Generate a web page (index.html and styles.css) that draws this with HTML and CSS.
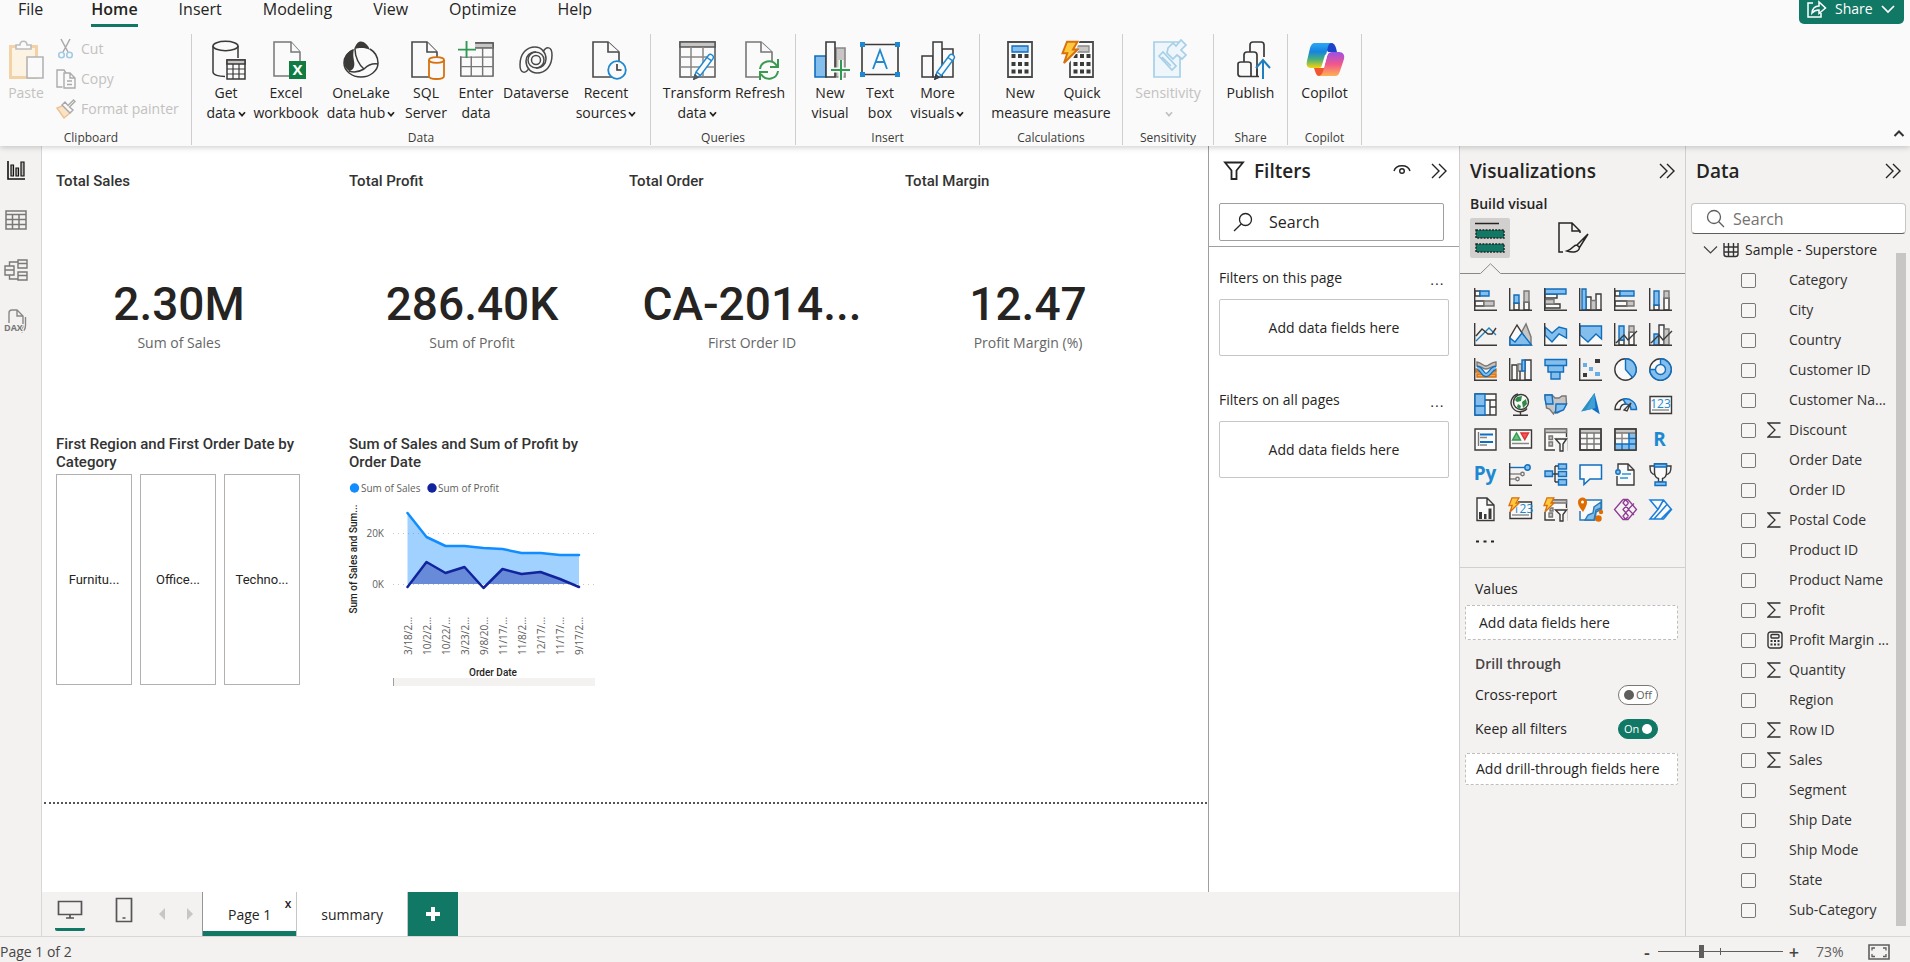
FILE: index.html
```html
<!DOCTYPE html>
<html lang="en">
<head>
<meta charset="utf-8">
<title>Sample - Superstore report</title>
<link rel="stylesheet" href="styles.css">
</head>
<body>
<svg width="0" height="0" class="defs" aria-hidden="true">
  <defs>
    <symbol id="chev" viewBox="0 0 8 8"><path d="M1 2.2 4 5.6 7 2.2" fill="none" stroke="currentColor" stroke-width="1.7"/></symbol>
    <symbol id="collapse" viewBox="0 0 16 16"><path d="M1 1l7 7-7 7M8 1l7 7-7 7" fill="none" stroke="currentColor" stroke-width="1.4"/></symbol>
    <symbol id="sigma" viewBox="0 0 14 16"><path d="M13.500 1H1l7 7-7 7h12.500" fill="none" stroke="currentColor" stroke-width="1.3"/></symbol>
    <symbol id="pencil" viewBox="0 0 22 27"><path d="M1 26 3 19 15.500 2.200q1.500-1.600 3.600-.2t.9 3.700L7.500 22.500zM3 19l4.500 3.500M14 4.500l4.600 3.400" fill="#fafafa" stroke="#1e88d0" stroke-width="1.500"/><path d="M1 26l1-4 3 2.300z" fill="#1e88d0"/></symbol>
    <symbol id="bolt" viewBox="0 0 12 16"><path d="M4 .8h7L8 6h3L2 15l2.200-6.500H1z" fill="#ffc83d" stroke="#d8700d" stroke-width="1.300"/></symbol>
  </defs>
</svg>

<header class="ribbon">
  <div class="tabs-row">
    <nav class="menu">
      <a href="#" class="menu-file">File</a><a href="#" class="active">Home</a><a href="#">Insert</a><a href="#">Modeling</a><a href="#">View</a><a href="#">Optimize</a><a href="#">Help</a>
    </nav>
    <button class="share"><svg width="20" height="17" viewBox="0 0 20 17" fill="none" stroke="#fff" stroke-width="1.500"><path d="M6 2H1v14h13v-4M5 12c.5-5 3-7 7-7V1l6.500 6L12 12.500V9c-3 0-5 .7-7 3z"/></svg>Share<svg width="14" height="10" viewBox="0 0 14 10"><path d="M1 2l6 6 6-6" fill="none" stroke="#fff" stroke-width="1.700"/></svg></button>
  </div>
  <div class="groups">
    <section class="group clipboard">
      <div class="buttons">
        <button class="rb disabled paste"><svg width="36" height="40" viewBox="-1 0 36 40"><path d="M1.500 6.500h26v31h-26z" fill="#fdf3e3" stroke="#f3d3a5" stroke-width="3"/><path d="M7 9V5h4c0-5 7-5 7 0h4v4z" fill="#fafafa" stroke="#bdbdbd" stroke-width="1.600"/><path d="M18 17h16v21H18z" fill="#fafafa" stroke="#b4b4b4" stroke-width="1.600"/></svg><span>Paste</span></button>
        <div class="small-buttons">
          <button class="disabled"><svg width="20" height="20" viewBox="0 0 20 20" fill="none"><path d="M5 0l7 13M14 0L7 13" stroke="#a9a9a9" stroke-width="1.500"/><circle cx="5.500" cy="16" r="2.800" stroke="#a4cbe4" stroke-width="1.600"/><circle cx="13.500" cy="16" r="2.800" stroke="#a4cbe4" stroke-width="1.600"/></svg>Cut</button>
          <button class="disabled"><svg width="20" height="20" viewBox="0 0 20 20" fill="#fafafa" stroke="#ababab" stroke-width="1.400"><path d="M6.500 18H1V1h7l2 3"/><path d="M8 4h6l5 5v10H8zM14 4v5h5M11 12h5M11 15.500h5"/></svg>Copy</button>
          <button class="disabled"><svg width="20" height="20" viewBox="0 0 20 20" stroke-width="1.400"><path d="M1 9l7 10 6-5-6-8z" fill="#fbe3c8" stroke="#efc18f"/><path d="M6 6l8 8 3-3-3.500-3L19 2.500 17.500 1 12 6.500 9 3z" fill="#fafafa" stroke="#a9a9a9"/></svg>Format painter</button>
        </div>
      </div>
      <h2>Clipboard</h2>
    </section>
    <section class="group">
      <div class="buttons">
        <button class="rb w50"><svg width="36" height="40" viewBox="-1 0 36 40" fill="#fafafa" stroke="#3b3a39" stroke-width="1.500"><path d="M4 6v25c0 3 6 5 13 5V18h12V6" stroke="none"/><ellipse cx="16.500" cy="6" rx="12.500" ry="4.700"/><path d="M4 6v26c0 3 6 4.500 12 4.500M29 6v12" fill="none"/><path d="M18 20h18v19H18z"/><path d="M18 20h18v4H18z" fill="#c8c6c4"/><path d="M18 29h18M18 34h18M24 24v15M30 24v15" stroke-width="1.200"/></svg><span>Get<br>data<svg class="chev"><use href="#chev"/></svg></span></button>
        <button class="rb w70"><svg width="36" height="40" viewBox="-1 0 36 40" fill="#fafafa" stroke="#777" stroke-width="1.500"><path d="M5 2h17l9 10v24H5z"/><path d="M22 2v10h9"/><path d="M20 21h17v18H20z" fill="#107c41" stroke="none"/><text x="28.500" y="35" class="xl" text-anchor="middle">X</text></svg><span>Excel<br>workbook</span></button>
        <button class="rb w80"><svg width="36" height="40" viewBox="0 0 36 40"><path d="M10 10C5 12 1 17 1 23c0 8 8 14 17 14s17-6 17-14c0-6-3-11-8-14" fill="#fafafa" stroke="#3b3a39" stroke-width="1.500"/><path d="M11 9.500C13 4 15 1.500 18 1.500s7 3 9 8.500c-5-2.500-11-2.500-16-.5zM11 9C4 12 1 17 1 22c0 4 2 7 5 9 5-1 6-5 5-10s-1-8 0-12z" fill="#3b3a39"/><path d="M12 9c0 8 4 16 9 20M21 29c4-4 8-6 14-5M21 29c-5 3-10 4-15 2" fill="none" stroke="#3b3a39" stroke-width="1.500"/></svg><span>OneLake<br>data hub<svg class="chev"><use href="#chev"/></svg></span></button>
        <button class="rb w50"><svg width="36" height="40" viewBox="0 0 36 40" fill="#fafafa" stroke="#4a4a4a" stroke-width="1.600"><path d="M4 2h15l10 10v25H4z"/><path d="M19 2v10h10"/><path d="M21 20v16c0 4 15 4 15 0V20" stroke="#d8700d" stroke-width="1.800"/><ellipse cx="28.500" cy="20" rx="7.500" ry="2.800" stroke="#d8700d" stroke-width="1.800"/></svg><span>SQL<br>Server</span></button>
        <button class="rb w50"><svg width="36" height="40" viewBox="0 0 38 40" fill="#fafafa" stroke="#555" stroke-width="1.500"><path d="M3 2h34v35H3z"/><path d="M15 2h22v5H15z" fill="#c8c6c4"/><path d="M3 17h34M3 27h34M14 10v27M26 7v30M15 7h22" stroke="#777"/><path d="M0 0h18v16H0z" stroke="none"/><path d="M9 0v18M0 9h19" stroke="#2f9b52" stroke-width="2"/></svg><span>Enter<br>data</span></button>
        <button class="rb w70"><svg width="36" height="40" viewBox="0 0 36 40" fill="none" stroke="#4a4a4a" stroke-width="1.500"><path d="M11 28C8 34 2 34 2 25 2 13 9 7 17 7c7 0 11 6 11 12 0 5-4 9-9 9-6 0-9-4-9-8 0-5 4-8 8-8"/><path d="M25 12c3-6 9-6 9 3 0 12-7 18-15 18-7 0-11-6-11-12 0-5 4-9 9-9 6 0 9 4 9 8 0 5-4 8-8 8"/><circle cx="18" cy="20" r="4.500"/></svg><span>Dataverse</span></button>
        <button class="rb w70"><svg width="36" height="40" viewBox="-1 0 36 40" fill="#fafafa" stroke="#4a4a4a" stroke-width="1.600"><path d="M4 2h15l11 10v25H4z"/><path d="M19 2v10h11"/><circle cx="28" cy="30" r="8.800" stroke="#1e88d0" stroke-width="1.800"/><path d="M28 24v6h4.500" stroke="#3b3a39"/></svg><span>Recent<br>sources<svg class="chev"><use href="#chev"/></svg></span></button>
      </div>
      <h2>Data</h2>
    </section>
    <section class="group">
      <div class="buttons">
        <button class="rb w74"><svg width="38" height="40" viewBox="-1 0 38 40" fill="#fafafa" stroke="#555" stroke-width="1.500"><path d="M1 2h35v35H1z"/><path d="M1 2h35v5H1z" fill="#c8c6c4"/><path d="M1 17h35M1 27h35M12 7v30M24 7v30" stroke="#8a8886"/><use href="#pencil" x="12" y="13" width="26" height="27"/></svg><span>Transform<br>data<svg class="chev"><use href="#chev"/></svg></span></button>
        <button class="rb w52"><svg width="36" height="40" viewBox="0 0 36 40" fill="#fafafa" stroke="#777" stroke-width="1.600"><path d="M4 2h15l11 10v25H4z"/><path d="M19 2v10h11"/><path d="M17 21h18v18H17z" stroke="none"/><path d="M18 29c1-8 12-11 17-3M36 19v8h-8M36 31c-1 8-12 11-17 3M18 40v-8h8" fill="none" stroke="#3a9a50" stroke-width="2"/></svg><span>Refresh</span></button>
      </div>
      <h2>Queries</h2>
    </section>
    <section class="group">
      <div class="buttons">
        <button class="rb w50"><svg width="36" height="40" viewBox="-2 0 36 40" stroke-width="1.600"><path d="M1 16h11v21H1z" fill="#83beec" stroke="#106ebe"/><path d="M22 8h9v29h-9z" fill="#c8c6c4" stroke="#8a8886"/><path d="M12 2h9v35h-9z" fill="#fafafa" stroke="#3b3a39"/><path d="M27 20v20M17 30h20" stroke="#fafafa" stroke-width="5"/><path d="M27 20v20M17 30h19" stroke="#2f9b52" stroke-width="2"/></svg><span>New<br>visual</span></button>
        <button class="rb w50"><svg width="40" height="40" viewBox="0 0 40 40" fill="#1e88d0"><path d="M2 4.500h36v30H2z" fill="#fafafa" stroke="#3b3a39" stroke-width="1.600"/><path d="M0 2h5v5H0zM35 2h5v5h-5zM0 32h5v5H0zM35 32h5v5h-5z"/><path d="M13 29 20 10l7 19M15.500 22h9" fill="none" stroke="#1e88d0" stroke-width="1.800"/></svg><span>Text<br>box</span></button>
        <button class="rb w65"><svg width="38" height="40" viewBox="-1 0 38 40" fill="#fafafa" stroke="#3b3a39" stroke-width="1.500"><path d="M2 16h11v21H2zM22 9h11v28H22z"/><path d="M13 2h9v35h-9z"/><use href="#pencil" x="12" y="13" width="26" height="27"/></svg><span>More<br>visuals<svg class="chev"><use href="#chev"/></svg></span></button>
      </div>
      <h2>Insert</h2>
    </section>
    <section class="group">
      <div class="buttons">
        <button class="rb w62"><svg width="26" height="40" viewBox="0 0 26 40"><path d="M1 2h24v35H1z" fill="#fafafa" stroke="#4a4a4a" stroke-width="1.800"/><path d="M5 6h16v6H5z" fill="#83beec" stroke="#106ebe" stroke-width="1.300"/><path d="M4.500 16h17M4.500 24h17M4.500 31.500h17" stroke="#3b3a39" stroke-width="4" stroke-dasharray="4 2.500"/></svg><span>New<br>measure</span></button>
        <button class="rb w62"><svg width="36" height="40" viewBox="3 0 36 40"><path d="M9 2h23v35H9z" fill="#fafafa" stroke="#4a4a4a" stroke-width="1.800"/><path d="M13 6h15v6H13z" fill="#c8c6c4" stroke="#8a8886" stroke-width="1.300"/><path d="M12.500 24h17M12.500 31.500h17M12.500 16h17" stroke="#3b3a39" stroke-width="4" stroke-dasharray="4 2.500"/><path d="M5 0h14l-4 10h3L8 23H0z" fill="#fafafa"/><use href="#bolt" x="0" y="0" width="18" height="25"/></svg><span>Quick<br>measure</span></button>
      </div>
      <h2>Calculations</h2>
    </section>
    <section class="group">
      <div class="buttons">
        <button class="rb w72 disabled"><svg width="36" height="40" viewBox="-1 0 36 40" fill="#eef6fb" stroke="#a6cfe8" stroke-width="1.700"><path d="M3 2h26v35H3z"/><path d="M8 16l4-4 13 14-4 4zM11 17l9 9M17 8l5-5 3 3 5-6 5 5-5 5 5 5-4 4-5-4-4 4-6-6z"/></svg><span>Sensitivity<br><svg class="chev"><use href="#chev"/></svg></span></button>
      </div>
      <h2>Sensitivity</h2>
    </section>
    <section class="group">
      <div class="buttons">
        <button class="rb w55"><svg width="36" height="40" viewBox="-2 0 36 40" fill="#fafafa" stroke="#3b3a39" stroke-width="1.700"><path d="M15 12V5q0-3 3-3h8q3 0 3 3v12M9 22v-7q0-3 3-3h7q3 0 3 3v21"/><path d="M3 24q0-2 3-2h7q3 0 3 2v12M3 24v10q0 2.500 3 2.500h18M22 29v7" fill="none"/><path d="M28 39V20M21 28l7-8 7 8" fill="none" stroke="#1e7fc0" stroke-width="2"/></svg><span>Publish</span></button>
      </div>
      <h2>Share</h2>
    </section>
    <section class="group">
      <div class="buttons">
        <button class="rb w55"><svg width="40" height="40" viewBox="0 0 40 40"><defs><linearGradient id="c1" x1="0" y1="0" x2="0" y2="1"><stop offset="0" stop-color="#2aa8f2"/><stop offset=".35" stop-color="#1683e0"/><stop offset=".65" stop-color="#48b07a"/><stop offset="1" stop-color="#f8d30c"/></linearGradient><linearGradient id="c2" x1="0" y1="0" x2="0" y2="1"><stop offset="0" stop-color="#9a50ea"/><stop offset=".5" stop-color="#f0568c"/><stop offset="1" stop-color="#ffb152"/></linearGradient></defs><path d="M18 3h8c3 0 4 2 5 5l1 4h-9z" fill="#1b44c8"/><path d="M22 36h-8c-2 0-3-2-4-5l-1-3h11z" fill="#f0562f"/><path d="M10 3h16c-3 1-3 4-4 8l-3 12c-1 4-3 5-6 5H6c-4 0-5-3-4-7L5 8c1-3 2-5 5-5z" fill="url(#c1)"/><path d="M30 36H14c3-1 4-4 5-8l3-12c1-3 3-4 5-4h7c4 0 6 3 5 7l-4 12c-1 3-2 5-5 5z" fill="url(#c2)"/><path d="M20 15l3-2-4 14-3 1z" fill="#fff"/></svg><span>Copilot</span></button>
      </div>
      <h2>Copilot</h2>
    </section>
    <button class="ribbon-collapse" aria-label="Collapse ribbon"><svg width="12" height="9" viewBox="0 0 12 9"><path d="M1.500 7 6 2.500 10.500 7" fill="none" stroke="#333" stroke-width="2"/></svg></button>
  </div>
</header>

<main class="workspace">
  <nav class="rail">
    <button aria-label="Report view"><svg width="24" height="24" viewBox="0 0 24 24" fill="none" stroke="#111" stroke-width="1.600"><path d="M4 3v18h17"/><path d="M7 7h2.500v11H7zM12 10h2.500v8H12zM17 4h3v14h-3z" fill="#b9b7b5" stroke-width="1.200"/></svg></button>
    <button aria-label="Table view"><svg width="24" height="24" viewBox="0 0 24 24" fill="none" stroke="#7a7876" stroke-width="1.500"><path d="M2 3h20v18H2zM2 6.500h20M2 11.500h20M2 16.500h20M8.500 6.500V21M15 6.500V21"/></svg></button>
    <button aria-label="Model view"><svg width="24" height="24" viewBox="0 0 24 24" fill="none" stroke="#7a7876" stroke-width="1.400"><path d="M1 8h9v9H1zM1 12h9M14 2h9v8h-9zM14 5.500h9M14 14h9v8h-9zM14 17.500h9M5.500 8V4H14M5.500 17v4H14"/></svg></button>
    <button aria-label="DAX query view"><svg width="24" height="26" viewBox="0 0 24 26" fill="none" stroke="#8a8886" stroke-width="1.400"><path d="M5 15V5q0-3 3-3h5l6 6v9q0 4-3 5M13 2v6h6M21.500 9v8q0 6-4 7"/><text x="0" y="23" class="dax">DAX</text></svg></button>
  </nav>

  <div class="center">
    <div class="center-top">
      <section class="canvas">
        <div class="report">
          <article class="card"><h3>Total Sales</h3><p class="value">2.30M</p><p class="caption">Sum of Sales</p></article>
          <article class="card"><h3>Total Profit</h3><p class="value">286.40K</p><p class="caption">Sum of Profit</p></article>
          <article class="card"><h3>Total Order</h3><p class="value">CA-2014...</p><p class="caption">First Order ID</p></article>
          <article class="card"><h3>Total Margin</h3><p class="value">12.47</p><p class="caption">Profit Margin (%)</p></article>
          <article class="visual"><h3>First Region and First Order Date by Category</h3>
            <div class="tiles"><button>Furnitu...</button><button>Office...</button><button>Techno...</button></div>
          </article>
          <article class="visual"><h3>Sum of Sales and Sum of Profit by Order Date</h3>
            <svg class="chart" width="246" height="210" viewBox="-1 0 246 210">
              <circle cx="4.500" cy="12" r="4.700" fill="#118dff"/><text x="11" y="16">Sum of Sales</text>
              <circle cx="82" cy="12" r="4.700" fill="#12239e"/><text x="88" y="16">Sum of Profit</text>
              <path d="M43 57.500h202M43 108.500h202" stroke="#c8c6c4" stroke-dasharray="1 4"/>
              <text x="34" y="61" text-anchor="end">20K</text><text x="34" y="112" text-anchor="end">0K</text>
              <path d="M57.500 37 76.500 61 95.500 70 114.500 70 133.500 72 152.500 73 171.500 77 190.500 77 210 79 229 79V108H57.500z" fill="#118dff" fill-opacity=".4"/>
              <path d="M59.500 108 76.500 86 95.500 97 114.500 91 130 108 137 108 152.500 93 171.500 98 190.500 96 210 103 222 108z" fill="#12239e" fill-opacity=".4"/>
              <path d="M57.500 37 76.500 61 95.500 70 114.500 70 133.500 72 152.500 73 171.500 77 190.500 77 210 79 229 79" fill="none" stroke="#118dff" stroke-width="2.500" stroke-linecap="round" stroke-linejoin="round"/>
              <path d="M57.500 111 76.500 86 95.500 97 114.500 91 133.500 112 152.500 93 171.500 98 190.500 96 210 103 229 111" fill="none" stroke="#12239e" stroke-width="2.500" stroke-linecap="round" stroke-linejoin="round"/>
              <text class="axis" transform="translate(7 83) rotate(-90)" text-anchor="middle">Sum of Sales and Sum...</text>
              <g class="ticks">
                <text transform="translate(62 179) rotate(-90)">3/18/2...</text>
                <text transform="translate(81 179) rotate(-90)">10/2/2...</text>
                <text transform="translate(100 179) rotate(-90)">10/22/...</text>
                <text transform="translate(119 179) rotate(-90)">3/23/2...</text>
                <text transform="translate(138 179) rotate(-90)">9/8/20...</text>
                <text transform="translate(157 179) rotate(-90)">11/17/...</text>
                <text transform="translate(176 179) rotate(-90)">11/8/2...</text>
                <text transform="translate(195 179) rotate(-90)">12/17/...</text>
                <text transform="translate(214 179) rotate(-90)">11/17/...</text>
                <text transform="translate(233 179) rotate(-90)">9/17/2...</text>
              </g>
              <text class="axis" x="143" y="200" text-anchor="middle">Order Date</text>
              <path d="M43 202h202v8H43z" fill="#f3f2f1"/><path d="M43.500 202v8" stroke="#a19f9d"/>
            </svg>
          </article>
        </div>
        <div class="page-edge"></div>
      </section>

      <aside class="filters">
        <header class="pane-head">
          <svg width="22" height="20" viewBox="0 0 22 20"><path d="M2 1.500h18l-6.500 8V18h-5V9.500z" fill="none" stroke="#252423" stroke-width="1.800"/></svg>
          <h2>Filters</h2>
          <button class="eye" aria-label="Show filters"><svg width="18" height="14" viewBox="0 0 18 14" fill="none" stroke="#252423" stroke-width="1.400"><path d="M1 7c2-7 14-7 16 0"/><circle cx="9" cy="7" r="2.300"/></svg></button>
          <button aria-label="Collapse filters"><svg width="16" height="16"><use href="#collapse"/></svg></button>
        </header>
        <div class="filter-search"><svg width="20" height="20" viewBox="0 0 20 20" fill="none" stroke="#252423" stroke-width="1.300"><circle cx="12.500" cy="7.500" r="6"/><path d="M8.200 12 1 19"/></svg><input type="text" placeholder="Search" aria-label="Search filters"></div>
        <section class="filter-block"><div class="filter-title"><h3>Filters on this page</h3><button>...</button></div><div class="dropzone">Add data fields here</div></section>
        <section class="filter-block"><div class="filter-title"><h3>Filters on all pages</h3><button>...</button></div><div class="dropzone">Add data fields here</div></section>
      </aside>
    </div>

    <footer class="page-tabs">
      <button class="device on" aria-label="Desktop layout"><svg width="26" height="20" viewBox="0 0 26 20" fill="none" stroke="#555" stroke-width="1.700"><path d="M1.500 1.500h23v13h-23zM13 14.500V18M9 18h8"/></svg></button>
      <button class="device" aria-label="Mobile layout"><svg width="18" height="26" viewBox="0 0 18 26" fill="none" stroke="#555" stroke-width="1.700"><path d="M1.500 1.500h15v23h-15zM7.500 21h3"/></svg></button>
      <div class="steps">
        <button aria-label="Previous page"><svg width="6" height="12" viewBox="0 0 6 12"><path d="M6 0v12L0 6z" fill="#c8c6c4"/></svg></button>
        <button aria-label="Next page"><svg width="6" height="12" viewBox="0 0 6 12"><path d="M0 0v12l6-6z" fill="#c8c6c4"/></svg></button>
      </div>
      <div class="page-tab current"><a href="#">Page 1</a><button class="close" aria-label="Delete page">x</button></div>
      <div class="page-tab"><a href="#">summary</a></div>
      <button class="add" aria-label="New page"><svg width="14" height="14" viewBox="0 0 14 14"><path d="M7 0v14M0 7h14" stroke="#fff" stroke-width="4"/></svg></button>
    </footer>
  </div>

  <aside class="viz">
    <header class="pane-head"><h2>Visualizations</h2><button aria-label="Collapse visualizations"><svg width="16" height="16"><use href="#collapse"/></svg></button></header>
    <h3 class="build">Build visual</h3>
    <div class="mode">
      <button class="sel" aria-label="Build visual"><svg width="32" height="32" viewBox="0 0 32 32"><path d="M1 1.500h24" stroke="#252423" stroke-width="1.500"/><path d="M2 8h28v8H2zM2 22h28v8H2z" fill="#117865" stroke="#252423" stroke-width="1.500" stroke-dasharray="2 1.200"/></svg></button>
      <button aria-label="Format visual"><svg width="32" height="32" viewBox="0 0 32 32" fill="none" stroke="#252423" stroke-width="1.500"><path d="M5 30H1V1h13l8 8v2M14 1v8h8M30 12 19 23l2.500 2.500L30 12zM19 23c-4 0-4 4-10 6 6 2 12 1 12.500-3.500"/></svg></button>
    </div>
    <svg class="callout" width="225" height="12" viewBox="0 0 225 12"><path d="M0 10.500h20.500L30.500 .8l10 9.700H225" fill="none" stroke="#8a8886"/></svg>
    <div class="gallery">
      <button aria-label="Stacked bar chart"><svg viewBox="0 0 23 23"><path class="w" d="M1 3h5v5H1zM1 13h9v5H1z"/><path class="b" d="M6 3h9v5H6z"/><path class="g" d="M10 13h10v5H10z"/><path class="k" d="M.7 0v22.300H23"/></svg></button>
      <button aria-label="Stacked column chart"><svg viewBox="0 0 23 23"><path class="w" d="M5 15h5v7H5zM15 14h5v8h-5z"/><path class="b" d="M5 7h5v8H5z"/><path class="g" d="M15 3h5v11h-5z"/><path class="k" d="M.7 0v22.300H23"/></svg></button>
      <button aria-label="Clustered bar chart"><svg viewBox="0 0 23 23"><path class="w" d="M1 6h12v4H1zM1 16h15v4H1z"/><path class="g" d="M1 11.500h9v4.500H1z"/><path class="b" d="M1 1h21v5H1z"/><path class="k" d="M.7 0v22.300H23"/></svg></button>
      <button aria-label="Clustered column chart"><svg viewBox="0 0 23 23"><path class="w" d="M7 9h5v13H7zM17 6h5v16h-5z"/><path class="g" d="M12 12.500h5V22h-5z"/><path class="b" d="M3 1h4v21H3z"/><path class="k" d="M.7 0v22.300H23"/></svg></button>
      <button aria-label="100% stacked bar chart"><svg viewBox="0 0 23 23"><path class="w" d="M1 3h5v5H1zM1 13h12v5H1z"/><path class="b" d="M6 3h14v5H6z"/><path class="g" d="M13 13h7v5h-7z"/><path class="k" d="M.7 0v22.300H23"/></svg></button>
      <button aria-label="100% stacked column chart"><svg viewBox="0 0 23 23"><path class="w" d="M5 17h5v5H5zM15 10h5v12h-5z"/><path class="b" d="M5 3h5v14H5z"/><path class="g" d="M15 3h5v7h-5z"/><path class="k" d="M.7 0v22.300H23"/></svg></button>

      <button aria-label="Line chart"><svg viewBox="0 0 23 23"><path class="n" d="M2 18 15 5l7 7"/><path class="k" d="M2 13l6-7 6 5 4 0 4-6M.7 0v22.300H23"/></svg></button>
      <button aria-label="Area chart"><svg viewBox="0 0 23 23"><path class="g" d="M11 12l6-11 5 13v8H12z"/><path class="w" d="M1 22v-8L8 2l7 11-3 9z"/><path class="b" d="M1 22v-7l5 4 7-9 9.500 12z"/></svg></button>
      <button aria-label="Stacked area chart"><svg viewBox="0 0 23 23"><path d="M1 11l7 8 7-7 8 3v7H1z" fill="#fafafa"/><path class="b" d="M1 4l7 6 7-6 7.500 2v9L15 11l-7 8-7-7z"/><path class="k" d="M.7 0v22.300H23"/></svg></button>
      <button aria-label="100% stacked area chart"><svg viewBox="0 0 23 23"><path d="M1 10h22v12H1z" fill="#fafafa"/><path class="b" d="M1 3h21.500v13L17 11l-8 8-8-7z"/><path class="k" d="M.7 0v22.300H23"/></svg></button>
      <button aria-label="Line and stacked column chart"><svg viewBox="0 0 23 23"><path class="w" d="M5 17h5v5H5zM15 9h5v13h-5z"/><path class="b" d="M5 3h5v14H5z"/><path class="g" d="M15 3h5v6h-5z"/><path class="k" d="M2 20l8-8 4 5 9-9M.7 0v22.300H23"/></svg></button>
      <button aria-label="Line and clustered column chart"><svg viewBox="0 0 23 23"><path class="b" d="M5 11h5v11H5z"/><path class="w" d="M10 2h5v20h-5z"/><path class="g" d="M15 6h5v16h-5z"/><path class="k" d="M2 20l8-8 4 5 9-9M.7 0v22.300H23"/></svg></button>

      <button aria-label="Ribbon chart"><svg viewBox="0 0 23 23"><path d="M2 11h5v3H2zM17 11h5v3h-5zM3 16h19v3H3z" fill="#f7a84a" stroke="#d8700d"/><path class="g" d="M3 4c5 1 6 4 9 4s5-4 10-4v4c-5 0-6 3-10 3S8 8 3 8z"/><path d="M3 10c5 0 5 7 9 7s5-7 10-7" fill="none" stroke="#106ebe" stroke-width="4.500"/><path d="M3 10c5 0 5 7 9 7s5-7 10-7" fill="none" stroke="#83beec" stroke-width="2"/><path class="k" d="M.7 0v22.300H23"/></svg></button>
      <button aria-label="Waterfall chart"><svg viewBox="0 0 23 23"><path class="w" d="M3 7h5v15H3zM16 2h6v20h-6z"/><path class="g" d="M9 6h4v7H9z"/><path class="b" d="M13 2h3v11h-3z"/><path class="k" d="M.7 0v22.300H23M11 13v9"/></svg></button>
      <button aria-label="Funnel"><svg viewBox="0 0 23 23"><path class="b" d="M1 1.500h21.500v6H1zM4 7.500h15.500v6.500H4zM7 14h9v7H7z"/></svg></button>
      <button aria-label="Scatter chart"><svg viewBox="0 0 23 23"><path d="M4 5h4v4H4zM10 9h4v4h-4zM16 14h5v4h-5z" fill="#68aee6"/><path d="M16 1h5v4h-5zM4 15h4v4H4z" fill="#3b3a39"/><path class="k" d="M.7 0v22.300H23"/></svg></button>
      <button aria-label="Pie chart"><svg viewBox="0 0 23 23"><circle class="w" cx="11.500" cy="11.500" r="10.700"/><path class="b" d="M11.500 .8a10.700 10.700 0 0 1 7 18.700l-7-8z"/></svg></button>
      <button aria-label="Donut chart"><svg viewBox="0 0 23 23"><circle class="w" cx="11.500" cy="11.500" r="10.700"/><path class="b" d="M11.500 .8a10.700 10.700 0 1 1-10.700 10.700h5.700l5-5z"/><circle cx="11.500" cy="11.500" r="5" fill="#f3f2f1" stroke="#106ebe" stroke-width="1.400"/></svg></button>

      <button aria-label="Treemap"><svg viewBox="0 0 23 23"><path class="w" d="M1 1h21v21H1zM11 7h11M16 7v15M16 14h6"/><path class="b" d="M1 1h10v12H1zM1 13h10v9H1z"/></svg></button>
      <button aria-label="Map"><svg viewBox="0 0 23 23"><path class="k" d="M9 1a9 9 0 1 0 9 14.500M11.500 19v3M4 22.300h15"/><circle class="w" cx="12" cy="9" r="7.500"/><path d="M8 4l5-1-1 5-4 1-2-2zM13 9l4-3 1 5-4 4zM9 11l3 2-1 3-3-2z" fill="#2d8a45"/></svg></button>
      <button aria-label="Filled map"><svg viewBox="0 0 23 23"><path class="g" d="M1 2h7l3 3h4l3-2h4l.5 8-3 5-6 4-3-1-1 2-4-5-3-1z"/><path class="b" d="M1 2h7l1 9H2L1 6zM12 11h10.500l-3 6-8 3z"/></svg></button>
      <button aria-label="Azure map"><svg viewBox="0 0 23 26"><path d="M16 0 1 21l12-3z" fill="#50b0e0"/><path d="M16 0v13l-3 5-12 3z" fill="#2c8fc4"/><path d="M16 0l6 24-9-6z" fill="#0f6fc6"/><path d="M16 0l1 17-4 1-6 1z" fill="#3f9fd4"/></svg></button>
      <button aria-label="Gauge"><svg viewBox="0 0 23 23"><path class="w" d="M1 16.500A10.500 10.500 0 0 1 11.500 6v5c-3 0-5 2-5.500 5.500z"/><path class="b" d="M9 6.300a10.500 10.500 0 0 1 13.500 10.200H17c0-3-2-5-5-5.500z"/><path d="M10 17l7-7-4 8z" class="k"/></svg></button>
      <button aria-label="Card"><svg viewBox="0 0 23 23"><path class="w" d="M1 3.500h21.500v17H1z"/><path d="M3 17h17" stroke="#8a8886"/><text x="11.500" y="14.500" text-anchor="middle" class="num">123</text></svg></button>

      <button aria-label="Multi-row card"><svg viewBox="0 0 23 23"><path class="w" d="M1 1h21v21H1z"/><path d="M4.500 4v14" stroke="#777"/><path d="M6 6.500h13M6 14h13" stroke="#106ebe" stroke-width="2"/><path d="M6 9.500h7M6 17h7" stroke="#8a8886"/></svg></button>
      <button aria-label="KPI"><svg viewBox="0 0 23 23"><path class="w" d="M1 2h21.500v18H1z"/><path d="M3.500 12 7.500 5l4 7z" fill="#6fbf82" stroke="#2f9b52"/><path d="M12 5h7.500l-3.700 6.500z" fill="#ee5a5a" stroke="#e03030"/><path d="M3 15.500h17" stroke="#8a8886" stroke-width="1.500"/></svg></button>
      <button aria-label="Slicer"><svg viewBox="0 0 23 23"><path class="w" d="M1 1h21.500v21H1z"/><path class="g" d="M1 1h21.500v3.500H1z"/><path class="g" d="M5 8h3.500v3.500H5zM5 14h3.500v4H5z"/><path d="M11 9h12v14H11z" fill="#f3f2f1"/><path class="w" d="M11.500 11h11l-3.500 5v7h-3v-7z"/></svg></button>
      <button aria-label="Table"><svg viewBox="0 0 23 23"><path class="w" d="M1 1h21v21H1z"/><path class="g" d="M1 1h21v4H1zM1 10.500h21M1 16h21M8 5v17M15 5v17"/><path class="k" d="M1 1h21v21H1z"/></svg></button>
      <button aria-label="Matrix"><svg viewBox="0 0 23 23"><path class="w" d="M1 1h21v21H1z"/><path d="M15 5h7v17H1v-6h14z" fill="#83beec"/><path class="g" d="M1 1h21v4H1z"/><path d="M1 10.500h14M8 5v11M15 5v5" stroke="#8a8886"/><path d="M1 16h21M15 10.500h7M8 16v6M15 5v17" stroke="#106ebe"/><path class="k" d="M1 1h21v21H1z"/></svg></button>
      <button aria-label="R script visual"><svg viewBox="0 0 23 23"><text x="10.500" y="18" text-anchor="middle" class="rtext">R</text></svg></button>

      <button aria-label="Python visual"><svg viewBox="0 0 23 23"><text x="11" y="17" text-anchor="middle" class="rtext">Py</text></svg></button>
      <button aria-label="Key influencers"><svg viewBox="0 0 23 23"><path d="M1 4.500h15" stroke="#106ebe" stroke-width="1.400"/><circle class="b" cx="18.500" cy="4.500" r="2.700"/><path d="M1 11h11M1 16h6" stroke="#8a8886" stroke-width="1.400"/><circle class="gh" cx="13.500" cy="11" r="1.700"/><circle class="gh" cx="8.500" cy="16" r="1.700"/><path class="k" d="M.7 0v22.300H23"/></svg></button>
      <button aria-label="Decomposition tree"><svg viewBox="0 0 23 23"><path class="k" d="M8 11h6M11 3v16M11 3h3M11 19h3"/><path class="b" d="M1 8h7.500v5.500H1zM14.500 1h8v5h-8zM14.500 8.500h8v5h-8zM14.500 16.500h8v5.500h-8z"/></svg></button>
      <button aria-label="Q&amp;A"><svg viewBox="0 0 23 23"><path d="M1 2h21.500v14H11l-6 5.500V16H1z" fill="#fafafa" stroke="#106ebe" stroke-width="1.500"/></svg></button>
      <button aria-label="Narrative"><svg viewBox="0 0 23 23"><path class="w" d="M4 6V1h10l6 6v15H3v-9"/><path class="k" d="M14 1v6h6"/><path d="M8 11h9M6 15h8" stroke="#2f94dc" stroke-width="1.400"/><circle cx="4" cy="9" r="2.200" class="b"/></svg></button>
      <button aria-label="Metrics"><svg viewBox="0 0 23 23"><path class="w" d="M5.500 3H1c0 6 1 8 6 9M17.500 3H22c0 6-1 8-6 9"/><path class="w" d="M5.500 1h12v8c0 4-2 6-4 6.500V19h-4v-3.500c-2-.5-4-2.500-4-6.500z"/><path class="b" d="M5.500 1h12v3h-12zM6 19h11v3.500H6z"/></svg></button>

      <button aria-label="Paginated report"><svg viewBox="0 0 23 23"><path class="w" d="M3 0h10l7 7v15.500H3zM13 0v7h7"/><path d="M5 14h3v7H5zM10 16h2.500v5H10zM14.500 10.500h3V21h-3z" fill="#3b3a39"/></svg></button>
      <button aria-label="Card (new)"><svg viewBox="0 0 23 23"><path class="w" d="M1 4h21.500v16.500H1z"/><path d="M3 17h17" stroke="#8a8886"/><text x="14" y="14.500" text-anchor="middle" class="num">123</text><path d="M0 0h9v8l-7 6H0z" fill="#f3f2f1"/><use href="#bolt" x="-1" y="-1" width="12" height="16"/></svg></button>
      <button aria-label="Slicer (new)"><svg viewBox="0 0 23 23"><path class="w" d="M1 2h21.500v20H1z"/><path class="g" d="M8 2h14.500v3H8zM5 15h3.500v4H5zM6 10h3v3H6z"/><path d="M11 10h12v13H11zM0 0h8v8l-6 6H0z" fill="#f3f2f1"/><path class="w" d="M11.500 12h11L19 16.500V23h-3v-6.500z"/><use href="#bolt" x="-1" y="-1" width="12" height="16"/></svg></button>
      <button aria-label="ArcGIS Maps"><svg viewBox="0 0 23 23"><path d="M6 2h16.500v9L17 14l-1 8H1v-9" fill="#fafafa" stroke="#2a7ab8" stroke-width="1.500"/><path d="M22 4v6l-5 2-2 10H6l3-5 5-2 1-6z" fill="#83beec" stroke="#2a7ab8"/><path d="M4 14C0 9-1 7-1 4c0-6 9-6 9 0 0 3-1 5-4 10z" fill="#e06c00"/><circle cx="3.500" cy="4" r="1.500" fill="#fff"/><circle cx="22" cy="14" r="2.200" fill="#e06c00"/><circle cx="19.500" cy="20.500" r="3.200" fill="#e06c00"/></svg></button>
      <button aria-label="Power Apps"><svg viewBox="0 0 23 23"><path d="M9 1.500h2.500L9 5l5.500 6L20 5.500M14 1.500h-2.500M14 1.500l8.500 10L14 21.500h-2.500L9 18l5.500-6.500L20 17M9 1.500l-8.500 10L9 21.500h2.500M14.500 5 9 11.500l5.500 6.500M11.500 1.500l3 3.500M14.500 18l-3 3.500" fill="none" stroke="#8f3a94" stroke-width="1.300"/></svg></button>
      <button aria-label="Power Automate"><svg viewBox="0 0 23 23"><path d="M1 2h13.500l8 9.500-8 9.500H1l8-9.500zM18 6.500 5 21M9 11.500 14.500 2M12 21l10-10" fill="#fafafa" stroke="#1a7fdc" stroke-width="1.500"/></svg></button>
      <button aria-label="Get more visuals"><svg viewBox="0 0 23 23"><path d="M2 7.500h3v2H2zM9.500 7.500h3v2h-3zM17 7.500h3v2h-3z" fill="#252423"/></svg></button>
    </div>
    <div class="wells">
      <h4>Values</h4>
      <div class="well">Add data fields here</div>
      <h4 class="strong">Drill through</h4>
      <label class="toggle-row"><span>Cross-report</span><input type="checkbox" role="switch"><span class="switch"></span></label>
      <label class="toggle-row"><span>Keep all filters</span><input type="checkbox" role="switch" checked><span class="switch"></span></label>
      <div class="well drill">Add drill-through fields here</div>
    </div>
  </aside>

  <aside class="data">
    <header class="pane-head"><h2>Data</h2><button aria-label="Collapse data"><svg width="16" height="16"><use href="#collapse"/></svg></button></header>
    <div class="data-search"><svg width="20" height="20" viewBox="0 0 20 20" fill="none" stroke="#605e5c" stroke-width="1.300"><circle cx="8" cy="8" r="6.500"/><path d="M12.800 12.800 18 18"/></svg><input type="text" placeholder="Search" aria-label="Search data"></div>
    <div class="tree">
      <div class="tree-list">
        <button class="table-row"><svg width="15" height="10" viewBox="0 0 15 10"><path d="M1 1.500l6.500 6.500L14 1.500" fill="none" stroke="#444" stroke-width="1.200"/></svg><svg width="16" height="16" viewBox="0 0 16 16" fill="none" stroke="#333" stroke-width="1.400"><path d="M1 1v11q0 2.500 2.500 2.500h9Q15 14.500 15 12V1M1 5h14M1 10h14M5.500 1v13.500M10.500 1v13.500"/></svg>Sample - Superstore</button>
        <label><input type="checkbox"><i></i>Category</label>
        <label><input type="checkbox"><i></i>City</label>
        <label><input type="checkbox"><i></i>Country</label>
        <label><input type="checkbox"><i></i>Customer ID</label>
        <label><input type="checkbox"><i></i>Customer Na...</label>
        <label><input type="checkbox"><i><svg><use href="#sigma"/></svg></i>Discount</label>
        <label><input type="checkbox"><i></i>Order Date</label>
        <label><input type="checkbox"><i></i>Order ID</label>
        <label><input type="checkbox"><i><svg><use href="#sigma"/></svg></i>Postal Code</label>
        <label><input type="checkbox"><i></i>Product ID</label>
        <label><input type="checkbox"><i></i>Product Name</label>
        <label><input type="checkbox"><i><svg><use href="#sigma"/></svg></i>Profit</label>
        <label><input type="checkbox"><i><svg class="calc" viewBox="0 0 16 18" fill="none" stroke="#333" stroke-width="1.400"><rect x="1" y="1" width="14" height="16" rx="2.500"/><rect x="4" y="3.500" width="8" height="3.500" rx="1"/><path d="M3.500 10h9M3.500 13.500h9" stroke-width="2" stroke-dasharray="2 1.500"/></svg></i>Profit Margin ...</label>
        <label><input type="checkbox"><i><svg><use href="#sigma"/></svg></i>Quantity</label>
        <label><input type="checkbox"><i></i>Region</label>
        <label><input type="checkbox"><i><svg><use href="#sigma"/></svg></i>Row ID</label>
        <label><input type="checkbox"><i><svg><use href="#sigma"/></svg></i>Sales</label>
        <label><input type="checkbox"><i></i>Segment</label>
        <label><input type="checkbox"><i></i>Ship Date</label>
        <label><input type="checkbox"><i></i>Ship Mode</label>
        <label><input type="checkbox"><i></i>State</label>
        <label><input type="checkbox"><i></i>Sub-Category</label>
      </div>
      <div class="scrollbar"></div>
    </div>
  </aside>
</main>

<footer class="status">
  <span class="page-count">Page 1 of 2</span>
  <div class="zoom">
    <button aria-label="Zoom out">-</button>
    <input type="range" min="0" max="100" value="34" aria-label="Zoom">
    <button aria-label="Zoom in">+</button>
    <span class="percent">73%</span>
    <button class="fit" aria-label="Fit to page"><svg width="22" height="16" viewBox="0 0 22 16" fill="none" stroke="#605e5c"><path d="M1 1h20v14H1z" stroke-width="1.600"/><path d="M4 6.500V4h3M15 4h3v2.500M18 10v2.500h-3M7 12.500H4V10" stroke-width="1.300"/></svg></button>
  </div>
</footer>
</body>
</html>
```
FILE: styles.css
```css
* { box-sizing: border-box; }
body {
  margin: 0;
  height: 100vh;
  display: flex;
  flex-direction: column;
  overflow: hidden;
  background: #f3f2f1;
  color: #252423;
  font: 14px/20px "Open Sans", "Noto Sans", sans-serif;
}
h2, h3, h4, p { margin: 0; font-weight: 400; font-size: inherit; }
button { border: 0; padding: 0; background: none; font: inherit; color: inherit; }
a { color: inherit; text-decoration: none; }
svg { display: block; flex: none; overflow: visible; }
.defs { position: absolute; }

/* Ribbon */
.ribbon {
  position: relative;
  z-index: 1;
  height: 146px;
  flex: none;
  background: #fafafa;
  box-shadow: 0 1px 6px rgba(0, 0, 0, .22);
}
.tabs-row { display: flex; justify-content: space-between; height: 34px; padding-right: 6px; }
.menu { display: flex; gap: 41px; padding-left: 18px; font-size: 16px; line-height: 18px; }
.menu a { height: 27px; border-bottom: 3px solid transparent; }
.menu .menu-file { margin-right: 7px; }
.menu .active { font-weight: 600; border-color: #117865; }
.share {
  display: flex;
  align-items: center;
  gap: 8px;
  width: 105px;
  height: 24px;
  padding: 0 10px 6px 8px;
  border-radius: 0 0 5px 5px;
  background: #117865;
  color: #fff;
}
.groups { display: flex; height: 112px; }
.group {
  display: flex;
  flex-direction: column;
  justify-content: space-between;
  height: 111px;
  padding: 0 9px;
  border-right: 1px solid #d0cecc;
}
.group h2 { font-size: 12px; line-height: 14px; text-align: center; color: #3b3a39; }
.buttons { display: flex; justify-content: center; align-items: flex-start; }
.rb { display: flex; flex-direction: column; align-items: center; gap: 3px; padding-top: 6px; white-space: nowrap; }
.w50 { width: 50px; }
.w52 { width: 52px; }
.w55 { width: 55px; }
.w62 { width: 62px; }
.w65 { width: 65px; }
.w70 { width: 70px; }
.w72 { width: 72px; }
.w74 { width: 74px; }
.w80 { width: 80px; }
.disabled { color: #c3c1bf; }
.chev { display: inline-block; width: 8px; height: 8px; margin-left: 2px; }
.clipboard { width: 192px; padding: 0 4px 0 7px; }
.clipboard .buttons { justify-content: flex-start; gap: 11px; }
.clipboard h2 { padding-right: 12px; }
.paste { width: 38px; }
.small-buttons { display: flex; flex-direction: column; gap: 10px; padding-top: 5px; }
.small-buttons button { display: flex; align-items: center; gap: 5px; white-space: nowrap; }
.ribbon-collapse { margin: auto 5px 8px auto; }
.xl { font: 700 15px "Open Sans", sans-serif; fill: #fff; stroke: none; }

/* Workspace */
.workspace { flex: 1; display: flex; min-height: 0; }
.rail {
  width: 42px;
  display: flex;
  flex-direction: column;
  gap: 26px;
  padding: 12px 0 0 4px;
  border-right: 1px solid #d9d7d5;
}
.dax { font: 700 9px "Open Sans", sans-serif; fill: #777; stroke: #f3f2f1; stroke-width: 2px; paint-order: stroke; }
.center { flex: 1; display: flex; flex-direction: column; min-width: 0; }
.center-top { flex: 1; display: flex; min-height: 0; background: #fff; }
.canvas { flex: 1; min-width: 0; padding-top: 26px; }
.report {
  display: grid;
  grid-template-columns: 293fr 280fr 276fr 303fr;
  grid-template-rows: 263px 250px;
  padding-left: 14px;
}
.report h3 { font: 500 15px/18px Roboto, sans-serif; color: #333; }
.card, .visual { width: 246px; }
.value { margin-top: 86px; font: 500 46px/56px Roboto, sans-serif; text-align: center; }
.caption { font-size: 14px; line-height: 22px; text-align: center; color: #666; }
.tiles { display: flex; gap: 8px; margin-top: 3px; }
.tiles button {
  width: 76px;
  height: 211px;
  border: 1px solid #b3b0ad;
  font: 400 13px Roboto, sans-serif;
}
.chart { margin-top: 5px; font: 10px "Open Sans", sans-serif; }
.chart text { fill: #605e5c; }
.chart .axis { font: 500 10px Roboto, sans-serif; fill: #252423; }
.page-edge { margin: 117px 1px 0 2px; border-top: 2px dotted #555; }

/* Shared pane pieces */
.pane-head { display: flex; align-items: center; height: 50px; }
.pane-head h2 { flex: 1; font-size: 19px; font-weight: 600; line-height: 24px; }
input { font: inherit; color: inherit; }
input[type="text"] { flex: 1; min-width: 0; border: 0; outline: 0; padding: 0; background: none; font-size: 16px; }

/* Filters */
.filters { width: 251px; border-left: 1px solid #a19f9d; background: #fff; }
.filters .pane-head { padding: 0 12px 0 14px; }
.filters .pane-head h2 { margin-left: 9px; }
.eye { margin-right: 20px; }
.filter-search {
  display: flex;
  align-items: center;
  gap: 16px;
  height: 38px;
  margin: 7px 15px 5px 10px;
  padding-left: 13px;
  border: 1px solid #a19f9d;
  border-radius: 2px;
}
.filter-search input::placeholder { color: #252423; }
.filter-search + .filter-block { border-top: 1px solid #a19f9d; }
.filter-block { padding: 20px 10px 0; }
.filter-block + .filter-block { padding-top: 33px; }
.filter-title { display: flex; justify-content: space-between; padding: 1px 5px 11px 0; }
.filter-title button { font-size: 20px; font-weight: 300; }
.dropzone {
  display: flex;
  align-items: center;
  justify-content: center;
  height: 57px;
  border: 1px solid #c8c6c4;
  border-radius: 2px;
}

/* Page tabs */
.page-tabs { display: flex; height: 44px; }
.device { width: 30px; margin-left: 13px; border-bottom: 3px solid transparent; height: 39px; display: grid; place-items: center; }
.device + .device { margin: 0 11px 0 24px; }
.device.on { border-color: #117865; border-radius: 2px; }
.steps { display: flex; gap: 4px; }
.steps button { width: 24px; display: grid; place-items: center; }
.page-tab {
  position: relative;
  display: flex;
  align-items: center;
  padding: 2px 24px 0;
  background: #fff;
  border-right: 1px solid #c8c6c4;
}
.page-tab.current { padding: 2px 25px 0; border-left: 1px solid #979593; }
.page-tab.current::after { content: ""; position: absolute; inset: auto 0 0 0; height: 5px; background: #117865; }
.page-tab.current a { font-weight: 500; }
.close { position: absolute; top: 2px; right: 5px; font-size: 12px; font-weight: 600; }
.add { width: 50px; display: grid; place-items: center; background: #117865; }

/* Visualizations */
.viz { width: 226px; border-left: 1px solid #d2d0ce; }
.viz .pane-head { padding: 0 10px; }
.build { padding-left: 10px; font-weight: 600; line-height: 16px; }
.mode { display: flex; gap: 44px; padding: 6px 10px 0; }
.mode button { width: 40px; height: 40px; display: grid; place-items: center; border-radius: 2px; }
.mode .sel { background: #d2d0ce; }
.callout { margin-top: 5px; width: 100%; }
.gallery { display: grid; grid-template-columns: repeat(6, 23px); grid-auto-rows: 23px; gap: 12px; padding: 13px 0 0 14px; height: 292px; }
.gallery svg { width: 23px; height: 23px; stroke-width: 1.4px; }
.k { fill: none; stroke: #3b3a39; }
.w { fill: #fafafa; stroke: #3b3a39; }
.b { fill: #83beec; stroke: #106ebe; }
.g { fill: #c8c6c4; stroke: #797775; }
.gh { fill: #fafafa; stroke: #797775; }
.n { fill: none; stroke: #1e7fc0; }
.num { font: 12px "Open Sans", sans-serif; fill: #1e88d0; }
.rtext { font: 700 19px "Open Sans", sans-serif; fill: #1e88d0; }
.wells { border-top: 1px solid #d2d0ce; padding: 11px 7px 0 5px; }
.wells h4 { padding-left: 10px; }
.wells .strong { margin: 14px 0 4px; font-weight: 600; color: #484644; }
.well { display: flex; align-items: center; height: 35px; margin-top: 6px; padding-left: 13px; background: #fff; border: 1px dashed #c0bebc; border-radius: 2px; }
.well.drill { height: 32px; padding-left: 10px; margin-top: 7px; }
.toggle-row { position: relative; display: flex; align-items: center; justify-content: space-between; height: 34px; padding: 0 20px 0 10px; }
.wells .toggle-row input { position: absolute; opacity: 0; }
.switch {
  display: flex;
  align-items: center;
  justify-content: space-between;
  width: 40px;
  height: 20px;
  padding: 0 5px;
  border: 1px solid #797775;
  border-radius: 10px;
  background: #fff;
  color: #605e5c;
  font-size: 11px;
}
.switch::before { content: ""; width: 10px; height: 10px; border-radius: 50%; background: #605e5c; }
.switch::after { content: "Off"; }
input:checked + .switch { flex-direction: row-reverse; background: #117865; border-color: #117865; color: #fff; }
input:checked + .switch::before { background: #fff; }
input:checked + .switch::after { content: "On"; }

/* Data */
.data { width: 225px; border-left: 1px solid #d2d0ce; display: flex; flex-direction: column; }
.data .pane-head { padding: 0 9px 0 10px; flex: none; }
.data-search {
  display: flex;
  align-items: center;
  gap: 7px;
  flex: none;
  height: 31px;
  margin: 7px 4px 0 5px;
  padding-left: 14px;
  background: #fff;
  border: 1px solid #c8c6c4;
  border-bottom-color: #605e5c;
  border-radius: 4px;
}
.data-search input::placeholder { color: #757371; }
.tree { display: flex; flex: 1; min-height: 0; padding: 1px 4px 10px 0; }
.tree-list { flex: 1; min-width: 0; white-space: nowrap; }
.scrollbar { width: 10px; margin-top: 18px; background: #c8c6c4; }
.table-row { display: flex; align-items: center; gap: 5px; height: 30px; padding-left: 17px; }
.table-row svg + svg { margin-right: 1px; }
.tree label { display: flex; align-items: center; height: 30px; padding-left: 55px; color: #323130; }
.tree input { appearance: none; flex: none; width: 15px; height: 15px; margin: 0 11px 0 0; border: 1px solid #797775; border-radius: 2px; background: #f7f6f5; }
.tree i { flex: none; width: 22px; }
.tree i svg { width: 14px; height: 16px; }
.tree i .calc { width: 16px; height: 18px; }

/* Status bar */
.status { display: flex; align-items: center; justify-content: space-between; height: 26px; padding-top: 4px; border-top: 1px solid #d9d7d5; color: #484644; }
.zoom { display: flex; align-items: center; padding-right: 20px; }
.zoom button { width: 22px; font-size: 18px; font-weight: 600; line-height: 20px; }
.zoom .percent { width: 61px; padding-left: 11px; color: #605e5c; }
.zoom .fit { margin-left: 2px; }
.zoom input {
  appearance: none;
  width: 125px;
  height: 14px;
  margin: 0;
  background: linear-gradient(#605e5c, #605e5c) center / 100% 1px no-repeat, linear-gradient(#605e5c, #605e5c) 50% 50% / 1px 7px no-repeat;
}
.zoom input::-webkit-slider-thumb { appearance: none; width: 5px; height: 13px; background: #605e5c; }
```
